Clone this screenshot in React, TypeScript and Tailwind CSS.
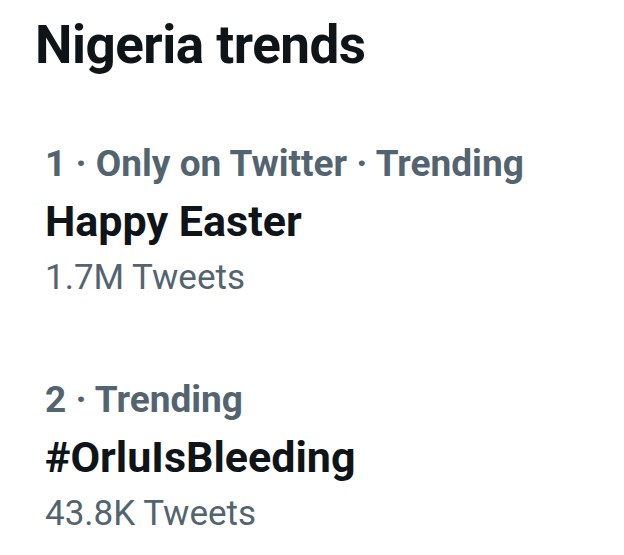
export default function App() {
  const trends = [
    { meta: "1 · Only on Twitter · Trending", name: "Happy Easter", count: "1.7M Tweets" },
    { meta: "2 · Trending", name: "#OrluIsBleeding", count: "43.8K Tweets" },
  ];

  return (
    <div className="min-h-[555px] w-[624px] bg-white font-['Roboto',sans-serif]">
      <h1 className="pl-[35px] pt-[13px] text-[53px] font-bold leading-[64px] tracking-[-0.5px] text-[#0f1419]">
        Nigeria trends
      </h1>
      <div className="mt-[65px] flex flex-col gap-[78px] pl-[45px]">
        {trends.map((t) => (
          <div key={t.name} className="flex flex-col">
            <p className="text-[37px] font-bold leading-[44px] text-[#536471]">{t.meta}</p>
            <p className="mt-[10px] text-[43px] font-bold leading-[50px] text-[#0f1419]">{t.name}</p>
            <p className="mt-[10px] text-[35px] leading-[44px] text-[#536471]">{t.count}</p>
          </div>
        ))}
      </div>
    </div>
  );
}
